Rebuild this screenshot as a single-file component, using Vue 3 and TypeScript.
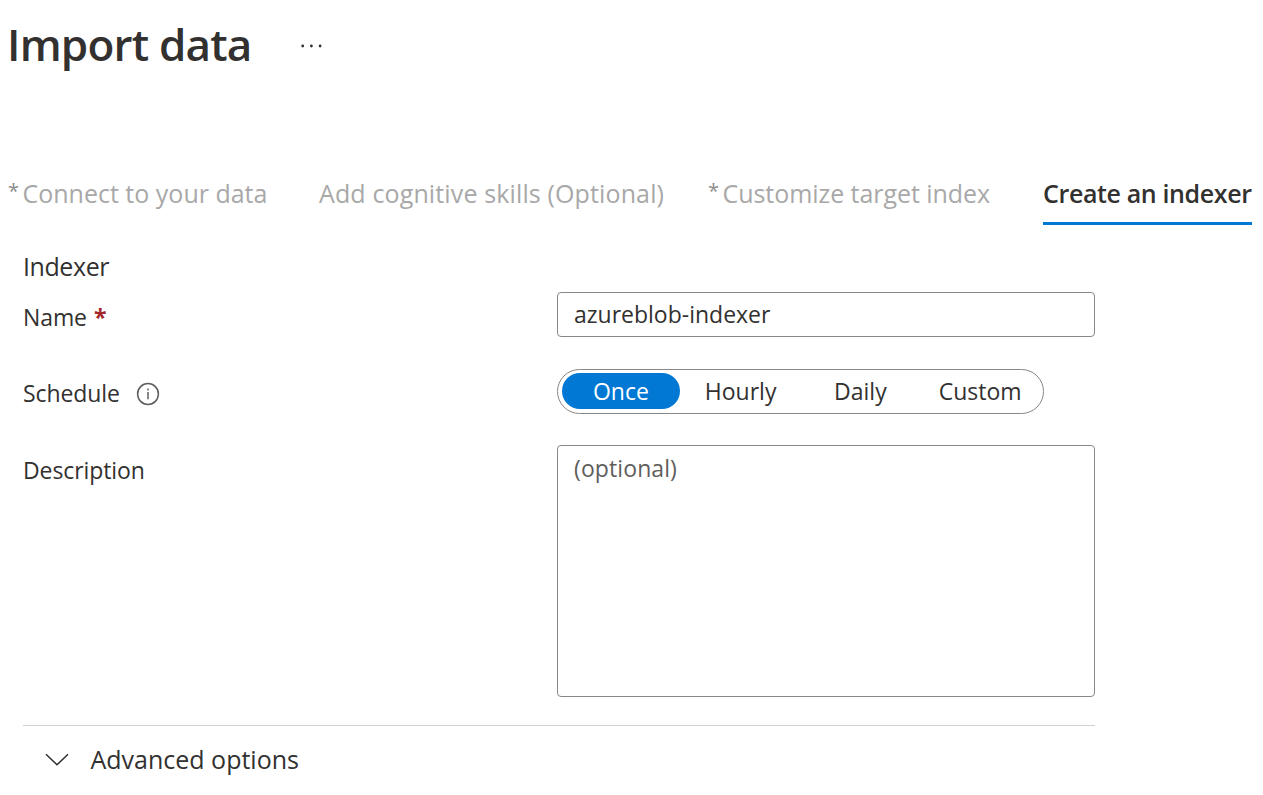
<script setup lang="ts">
import { ref } from 'vue'

interface Tab {
  id: string
  label: string
  required: boolean
}

const tabs: Tab[] = [
  { id: 'connect', label: 'Connect to your data', required: true },
  { id: 'skills', label: 'Add cognitive skills (Optional)', required: false },
  { id: 'customize', label: 'Customize target index', required: true },
  { id: 'indexer', label: 'Create an indexer', required: false },
]
const activeTab = ref('indexer')

const schedules: string[] = ['Once', 'Hourly', 'Daily', 'Custom']
const schedule = ref('Once')
const name = ref('azureblob-indexer')
const description = ref('')
</script>

<template>
  <main class="page">
    <header class="header">
      <h1 class="title">Import data</h1>
      <button class="more" aria-label="More">
        <svg width="24" height="6" viewBox="0 0 24 6">
          <circle cx="2.7" cy="3" r="1.4" />
          <circle cx="11.4" cy="3" r="1.4" />
          <circle cx="20.1" cy="3" r="1.4" />
        </svg>
      </button>
    </header>

    <nav class="tabs">
      <div
        v-for="tab in tabs"
        :key="tab.id"
        class="tab"
        :class="[tab.id, { active: tab.id === activeTab }]"
      >
        <span v-if="tab.required" class="star">*</span>
        <span class="tab-label">{{ tab.label }}</span>
      </div>
    </nav>

    <section class="form">
      <h2 class="section-title">Indexer</h2>

      <div class="row name-row">
        <label class="label"><span class="name-text">Name</span><span class="required">*</span></label>
        <input v-model="name" class="input" type="text" spellcheck="false" />
      </div>

      <div class="row schedule-row">
        <label class="label">
          <span class="schedule-text">Schedule</span>
          <svg class="info" width="24" height="24" viewBox="0 0 24 24">
            <circle cx="12" cy="12" r="10.4" />
            <path d="M12 10V17.2" />
            <path d="M12 6.6V8.5" />
          </svg>
        </label>
        <div class="segments">
          <button
            v-for="item in schedules"
            :key="item"
            class="segment"
            :class="[item.toLowerCase(), { selected: item === schedule }]"
            @click="schedule = item"
          >{{ item }}</button>
        </div>
      </div>

      <div class="row description-row">
        <label class="label"><span class="description-text">Description</span></label>
        <textarea v-model="description" class="textarea" placeholder="(optional)"></textarea>
      </div>

      <div class="advanced">
        <svg class="chevron" width="24" height="14" viewBox="0 0 24 14">
          <path d="M1 1.2L12 11.8L23 1.2" />
        </svg>
        <span class="advanced-text">Advanced options</span>
      </div>
    </section>
  </main>
</template>

<style>
body {
  background: #fff;
}
</style>

<style scoped>
.page {
  box-sizing: border-box;
  width: 1263px;
  height: 795px;
  overflow: hidden;
  padding: 14px 0 0 7px;
  background: #fff;
  color: #323130;
  font-family: "Open Sans", "Noto Sans", sans-serif;
  font-size: 23px;
}
.page * {
  box-sizing: border-box;
}
.page span,
.page h1,
.page h2 {
  white-space: nowrap;
}
.header {
  display: flex;
  height: 161px;
}
.title {
  margin: 0;
  width: 291px;
  font-size: 44px;
  line-height: 60px;
  font-weight: 600;
  letter-spacing: -0.8px;
}
.more {
  display: flex;
  align-items: center;
  height: 63px;
  padding: 0;
  border: 0;
  background: none;
  fill: #323130;
  margin-left: 2px;
}
.tabs {
  display: grid;
  grid-template-columns: 311px 389px 335px 209px;
  height: 73px;
  margin-left: 1px;
}
.tab {
  display: flex;
  height: 50px;
  line-height: 37px;
  font-size: 25px;
  color: #a8a8a8;
}
.star {
  width: 14.5px;
  font-size: 20px;
  line-height: 32px;
  color: #8c8c8c;
}
.tab.skills {
  letter-spacing: 0.13px;
}
.tab.customize {
  letter-spacing: -0.06px;
}
.tab.active {
  border-bottom: 3px solid #0078d4;
  color: #323130;
  font-weight: 600;
  letter-spacing: -0.37px;
}
.form {
  width: 1072px;
  margin-left: 16px;
}
.section-title {
  margin: 0;
  height: 44px;
  line-height: 37px;
  font-size: 25px;
  font-weight: 400;
  letter-spacing: -0.42px;
}
.row {
  display: grid;
  grid-template-columns: 534px 538px;
}
.label {
  display: flex;
  line-height: 34px;
  letter-spacing: -0.1px;
}
.name-row {
  height: 77px;
}
.name-row .label {
  padding-top: 8px;
}
.required {
  margin-left: 7px;
  color: #a4262c;
  font-weight: 700;
}
.input,
.textarea {
  width: 538px;
  margin: 0;
  border: 1px solid #8a8886;
  border-radius: 4px;
  background: #fff;
  color: #323130;
  font: inherit;
  outline: none;
  resize: none;
}
.input {
  height: 45px;
  padding: 0 16px 2px;
}
.schedule-row {
  height: 76px;
}
.schedule-row .label {
  padding-top: 7px;
}
.info {
  margin: 6px 0 0 16px;
  fill: none;
  stroke: #605e5c;
  stroke-width: 1.5;
}
.segments {
  display: flex;
  gap: 2px;
  width: 487px;
  height: 45px;
  padding: 3px 4px;
  border: 1px solid #8a8886;
  border-radius: 23px;
}
.segment {
  width: 118px;
  height: 36px;
  padding: 0;
  border: 0;
  border-radius: 18px;
  background: none;
  color: #323130;
  font: inherit;
  line-height: 36px;
}
.segment.selected {
  background: #0078d4;
  color: #fff;
}
.description-row {
  height: 280px;
}
.description-row .label {
  padding-top: 8px;
}
.textarea {
  display: block;
  height: 252px;
  padding: 5px 16px;
  line-height: 34px;
  letter-spacing: 0.1px;
}
.textarea::placeholder {
  color: #605e5c;
  opacity: 1;
}
.advanced {
  display: flex;
  align-items: flex-start;
  padding: 15px 0 0 21.5px;
  border-top: 1px solid #d2d0ce;
  font-size: 25px;
  line-height: 37px;
}
.chevron {
  margin: 12px 22px 0 0;
  fill: none;
  stroke: #323130;
  stroke-width: 1.5;
}
</style>
